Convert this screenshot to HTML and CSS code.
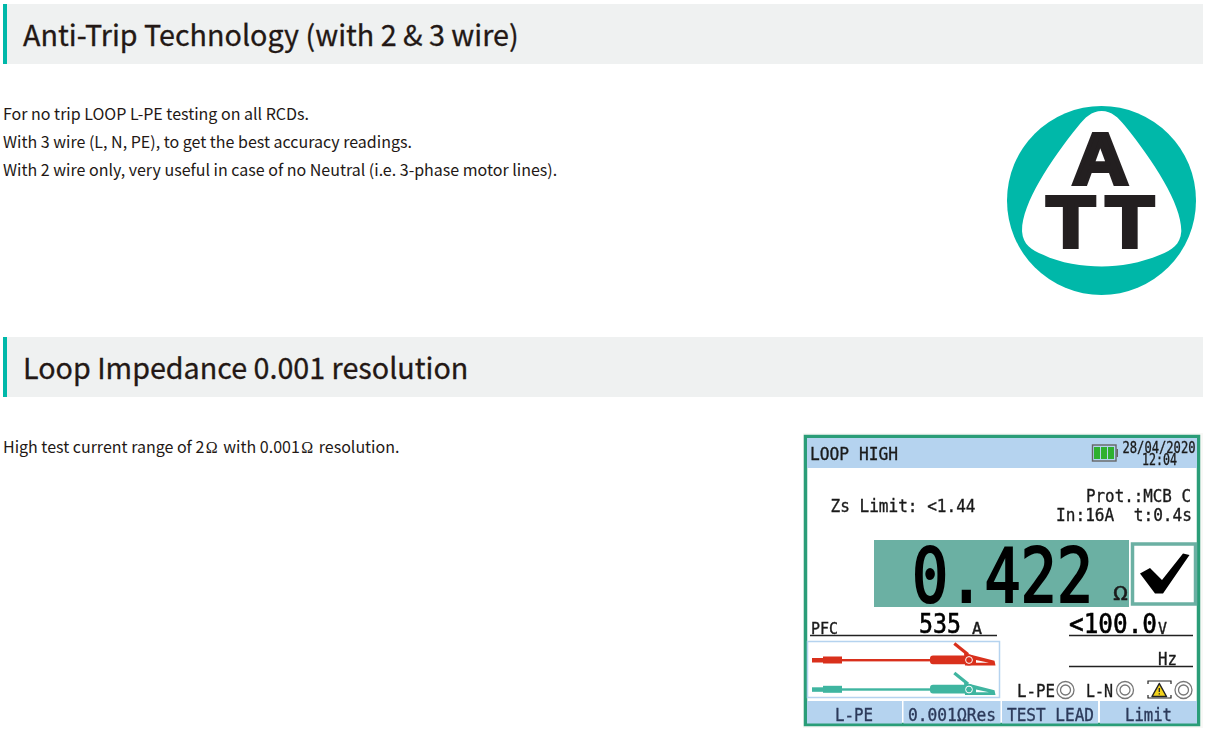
FILE: index.html
```html
<!DOCTYPE html>
<html lang="en">
<head>
<meta charset="utf-8">
<title>Anti-Trip Technology</title>
<link rel="stylesheet" href="styles.css">
</head>
<body>
<section class="feature">
  <h2 class="feature-title">Anti-Trip Technology (with 2 &amp; 3 wire)</h2>
  <div class="feature-row feature-row-logo">
    <p class="feature-text">For no trip LOOP L-PE testing on all RCDs.<br>With 3 wire (L, N, PE), to get the best accuracy readings.<br>With 2 wire only, very useful in case of no Neutral (i.e. 3-phase motor lines).</p>
    <svg class="att-logo" viewBox="52 50 565 565" role="img" aria-label="ATT logo">
      <circle cx="334.5" cy="332.5" r="282.5" class="logo-teal"/>
      <path class="logo-white" d="M335 65C365 65 385 85 405 110C490 215 575 345 573 425C570 465 545 480 510 495C450 520 390 530 335 530C280 530 210 520 160 495C125 480 100 465 97 425C95 345 180 215 265 110C285 85 305 65 335 65Z"/>
      <text class="logo-letter" x="247" y="282" textLength="168" lengthAdjust="spacingAndGlyphs">A</text>
      <text class="logo-letter" x="170" y="472" textLength="145" lengthAdjust="spacingAndGlyphs">T</text>
      <text class="logo-letter" x="347" y="472" textLength="144" lengthAdjust="spacingAndGlyphs">T</text>
    </svg>
  </div>
</section>
<section class="feature">
  <h2 class="feature-title">Loop Impedance 0.001 resolution</h2>
  <div class="feature-row">
    <p class="feature-text">High test current range of 2<span class="ohm">Ω</span> with 0.001<span class="ohm">Ω</span> resolution.</p>
    <svg class="screen" viewBox="803 433 400 295" role="img" aria-label="Tester display">
      <rect x="803" y="433" width="400" height="295" class="scr-paper"/>
      <rect x="805.5" y="436.5" width="393" height="288" class="scr-frame"/>
      <rect x="807" y="438" width="390" height="30" class="scr-blue"/>
      <text class="mono t-head" x="810" y="460" textLength="88" lengthAdjust="spacingAndGlyphs">LOOP HIGH</text>
      <rect x="1092.5" y="445" width="23.5" height="16" class="bat-case"/>
      <rect x="1116.5" y="449" width="1.5" height="8" class="bat-tip"/>
      <rect x="1094" y="447" width="6" height="12" class="bat-cell"/>
      <rect x="1101" y="447" width="6" height="12" class="bat-cell"/>
      <rect x="1108" y="447" width="6" height="12" class="bat-cell"/>
      <text class="mono t-date" x="1122.5" y="452.5" textLength="73" lengthAdjust="spacingAndGlyphs">28/04/2020</text>
      <text class="mono t-date" x="1142" y="464.5" textLength="35" lengthAdjust="spacingAndGlyphs">12:04</text>
      <text class="mono t-mid" x="830.5" y="512" textLength="145" lengthAdjust="spacingAndGlyphs">Zs Limit: &lt;1.44</text>
      <text class="mono t-mid" x="1086" y="502" textLength="105" lengthAdjust="spacingAndGlyphs">Prot.:MCB C</text>
      <text class="mono t-mid" x="1056" y="521" xml:space="preserve" textLength="136" lengthAdjust="spacingAndGlyphs">In:16A  t:0.4s</text>
      <rect x="874" y="540" width="255" height="67" class="scr-teal"/>
      <text class="mono t-value" x="912" y="602" textLength="181" lengthAdjust="spacingAndGlyphs">0.422</text>
      <text class="mono t-unit" x="1113" y="600" textLength="15" lengthAdjust="spacingAndGlyphs">Ω</text>
      <rect x="1132.5" y="544" width="63" height="60" class="scr-check-box"/>
      <polygon class="scr-check" points="1140,573.5 1150,568 1162,580 1183,553.5 1189.5,555 1163,593.5 1155,593.5"/>
      <text class="mono t-small" x="811" y="634" textLength="27" lengthAdjust="spacingAndGlyphs">PFC</text>
      <text class="mono t-big" x="919" y="633" textLength="42" lengthAdjust="spacingAndGlyphs">535</text>
      <text class="mono t-small" x="972" y="634" textLength="10" lengthAdjust="spacingAndGlyphs">A</text>
      <line x1="810" y1="635.5" x2="997" y2="635.5" class="scr-line"/>
      <text class="mono t-big" x="1069" y="632.5" textLength="88" lengthAdjust="spacingAndGlyphs">&lt;100.0</text>
      <text class="mono t-small" x="1158" y="634" textLength="9" lengthAdjust="spacingAndGlyphs">V</text>
      <line x1="1069" y1="635.5" x2="1193" y2="635.5" class="scr-line"/>
      <text class="mono t-mid" x="1158" y="665" textLength="19" lengthAdjust="spacingAndGlyphs">Hz</text>
      <line x1="1069" y1="666.5" x2="1193" y2="666.5" class="scr-line"/>
      <rect x="807.5" y="641.5" width="192" height="56" class="scr-leads"/>
      <g class="lead-red">
        <rect x="812" y="658" width="12" height="4.5"/>
        <rect x="823" y="656.5" width="19" height="7"/>
        <rect x="842" y="659" width="92" height="2.4"/>
        <rect x="930" y="655.5" width="38" height="8.8" rx="3"/>
        <line x1="954.3" y1="643.5" x2="968" y2="654.5" class="lead-handle"/>
        <polygon points="964,653 994.5,660.8 995.5,665.5 965,665.5"/>
        <polygon points="976,660 989,662.8 976,662.8" class="lead-hole"/>
        <circle cx="969" cy="660" r="5.6"/>
        <circle cx="969" cy="660" r="3.4" class="lead-ring"/>
      </g>
      <g class="lead-teal">
        <rect x="812" y="687.3" width="12" height="4.5"/>
        <rect x="823" y="685.8" width="19" height="7"/>
        <rect x="842" y="688.3" width="92" height="2.4"/>
        <rect x="930" y="684.8" width="38" height="8.8" rx="3"/>
        <line x1="954.3" y1="673" x2="968" y2="684" class="lead-handle"/>
        <polygon points="964,682.5 994.5,690.3 995.5,695 965,695"/>
        <polygon points="976,689.5 989,692.3 976,692.3" class="lead-hole"/>
        <circle cx="969" cy="689.5" r="5.6"/>
        <circle cx="969" cy="689.5" r="3.4" class="lead-ring"/>
      </g>
      <text class="mono t-status" x="1017" y="697" textLength="38" lengthAdjust="spacingAndGlyphs">L-PE</text>
      <circle cx="1065.5" cy="690" r="8.5" class="ring"/><circle cx="1065.5" cy="690" r="5" class="ring"/>
      <text class="mono t-status" x="1086" y="697" textLength="27" lengthAdjust="spacingAndGlyphs">L-N</text>
      <circle cx="1125" cy="690" r="8.5" class="ring"/><circle cx="1125" cy="690" r="5" class="ring"/>
      <path class="warn-bracket" d="M1148 684V681H1171V684M1148 695V698H1171V695"/>
      <polygon class="warn" points="1159.3,683.5 1166.5,696.5 1152,696.5"/>
      <line x1="1159.3" y1="688" x2="1159.3" y2="692" class="warn-mark"/>
      <line x1="1159.3" y1="693.2" x2="1159.3" y2="694.6" class="warn-mark"/>
      <circle cx="1183.5" cy="690" r="8.5" class="ring"/><circle cx="1183.5" cy="690" r="5" class="ring"/>
      <rect x="807" y="701" width="95" height="22.5" class="scr-blue"/>
      <rect x="903.5" y="701" width="97" height="22.5" class="scr-blue"/>
      <rect x="1002" y="701" width="96" height="22.5" class="scr-blue"/>
      <rect x="1100" y="701" width="97" height="22.5" class="scr-blue"/>
      <text class="mono t-foot" x="835" y="720.5" textLength="38" lengthAdjust="spacingAndGlyphs">L-PE</text>
      <text class="mono t-foot" x="908" y="720.5" textLength="88" lengthAdjust="spacingAndGlyphs">0.001ΩRes</text>
      <text class="mono t-foot" x="1007" y="720.5" textLength="87" lengthAdjust="spacingAndGlyphs">TEST LEAD</text>
      <text class="mono t-foot" x="1125" y="720.5" textLength="47" lengthAdjust="spacingAndGlyphs">Limit</text>
    </svg>
  </div>
</section>
</body>
</html>
```
FILE: styles.css
```css
html, body {
  margin: 0;
  background: #fff;
}
body {
  padding: 4px 3px 0;
  font-family: "Noto Sans CJK JP", "Noto Sans", sans-serif;
  color: #231815;
}
.feature-title {
  margin: 0;
  height: 60px;
  box-sizing: border-box;
  padding-left: 16px;
  border-left: 4px solid #00b8a9;
  background: #eff1f1;
  font-size: 28.7px;
  font-weight: 400;
  line-height: 60px;
  -webkit-text-stroke: 0.3px #231815;
}
.feature-row {
  display: flex;
  justify-content: space-between;
  align-items: flex-start;
  margin-top: 35px;
}
.feature-row-logo {
  padding-right: 7px;
  margin-bottom: 42px;
}
.feature-text {
  margin: 0;
  font-size: 16px;
  line-height: 28px;
}
.ohm {
  font-family: "Liberation Serif", serif;
  padding: 0 2px 0 1.5px;
}
.att-logo {
  display: block;
  width: 189px;
  height: 189px;
  margin-top: 7px;
}
.logo-teal { fill: #00b8a9; }
.logo-white { fill: #fff; }
.logo-letter {
  font-family: "Liberation Sans", Arial, sans-serif;
  font-weight: 700;
  font-size: 218px;
  fill: #231f20;
  stroke: #231f20;
  stroke-width: 12;
  stroke-linejoin: miter;
}
.screen {
  display: block;
  width: 400px;
  height: 295px;
  margin-top: 1px;
  filter: blur(0.4px);
}
.scr-paper { fill: #f8f8f6; }
.scr-frame { fill: #fff; stroke: #2a9d78; stroke-width: 3.5; }
.scr-blue { fill: #b5d3ef; }
.scr-teal { fill: #6bb0a3; }
.scr-check-box { fill: #fff; stroke: #6bb0a3; stroke-width: 3.5; }
.scr-check { fill: #000; }
.scr-line { stroke: #222; stroke-width: 1.3; }
.scr-leads { fill: #fff; stroke: #b5d3ef; stroke-width: 1.5; }
.lead-red { fill: #d9301c; stroke: none; }
.lead-teal { fill: #3fb5a0; stroke: none; }
.lead-red .lead-handle { stroke: #d9301c; stroke-width: 3.2; }
.lead-teal .lead-handle { stroke: #3fb5a0; stroke-width: 3.2; }
.lead-hole { fill: #fff; }
.lead-ring { fill: none; stroke: #fff; stroke-width: 1; }
.ring { fill: none; stroke: #777; stroke-width: 1.3; }
.warn { fill: #f2d21b; stroke: #222; stroke-width: 1.5; stroke-linejoin: round; }
.warn-mark { stroke: #222; stroke-width: 1.3; }
.warn-bracket { fill: none; stroke: #222; stroke-width: 1.2; }
.bat-case { fill: #b5d3ef; stroke: #666; stroke-width: 1.4; }
.bat-tip { fill: #666; }
.bat-cell { fill: #2fb02f; }
.mono {
  font-family: "DejaVu Sans Mono", "Liberation Mono", monospace;
  fill: #1a1a1a;
  stroke: #1a1a1a;
  stroke-width: 0.35;
}
.t-head { font-size: 18px; }
.t-date { font-size: 15px; }
.t-mid { font-size: 17px; }
.t-value { font-size: 74px; fill: #000; stroke: #000; stroke-width: 2.2; }
.t-unit { font-size: 20px; }
.t-small { font-size: 15px; }
.t-big { font-size: 27px; fill: #000; stroke: #000; stroke-width: 0.6; }
.t-status { font-size: 17px; }
.t-foot { font-size: 17px; fill: #2c3a5a; stroke: #2c3a5a; }
```
